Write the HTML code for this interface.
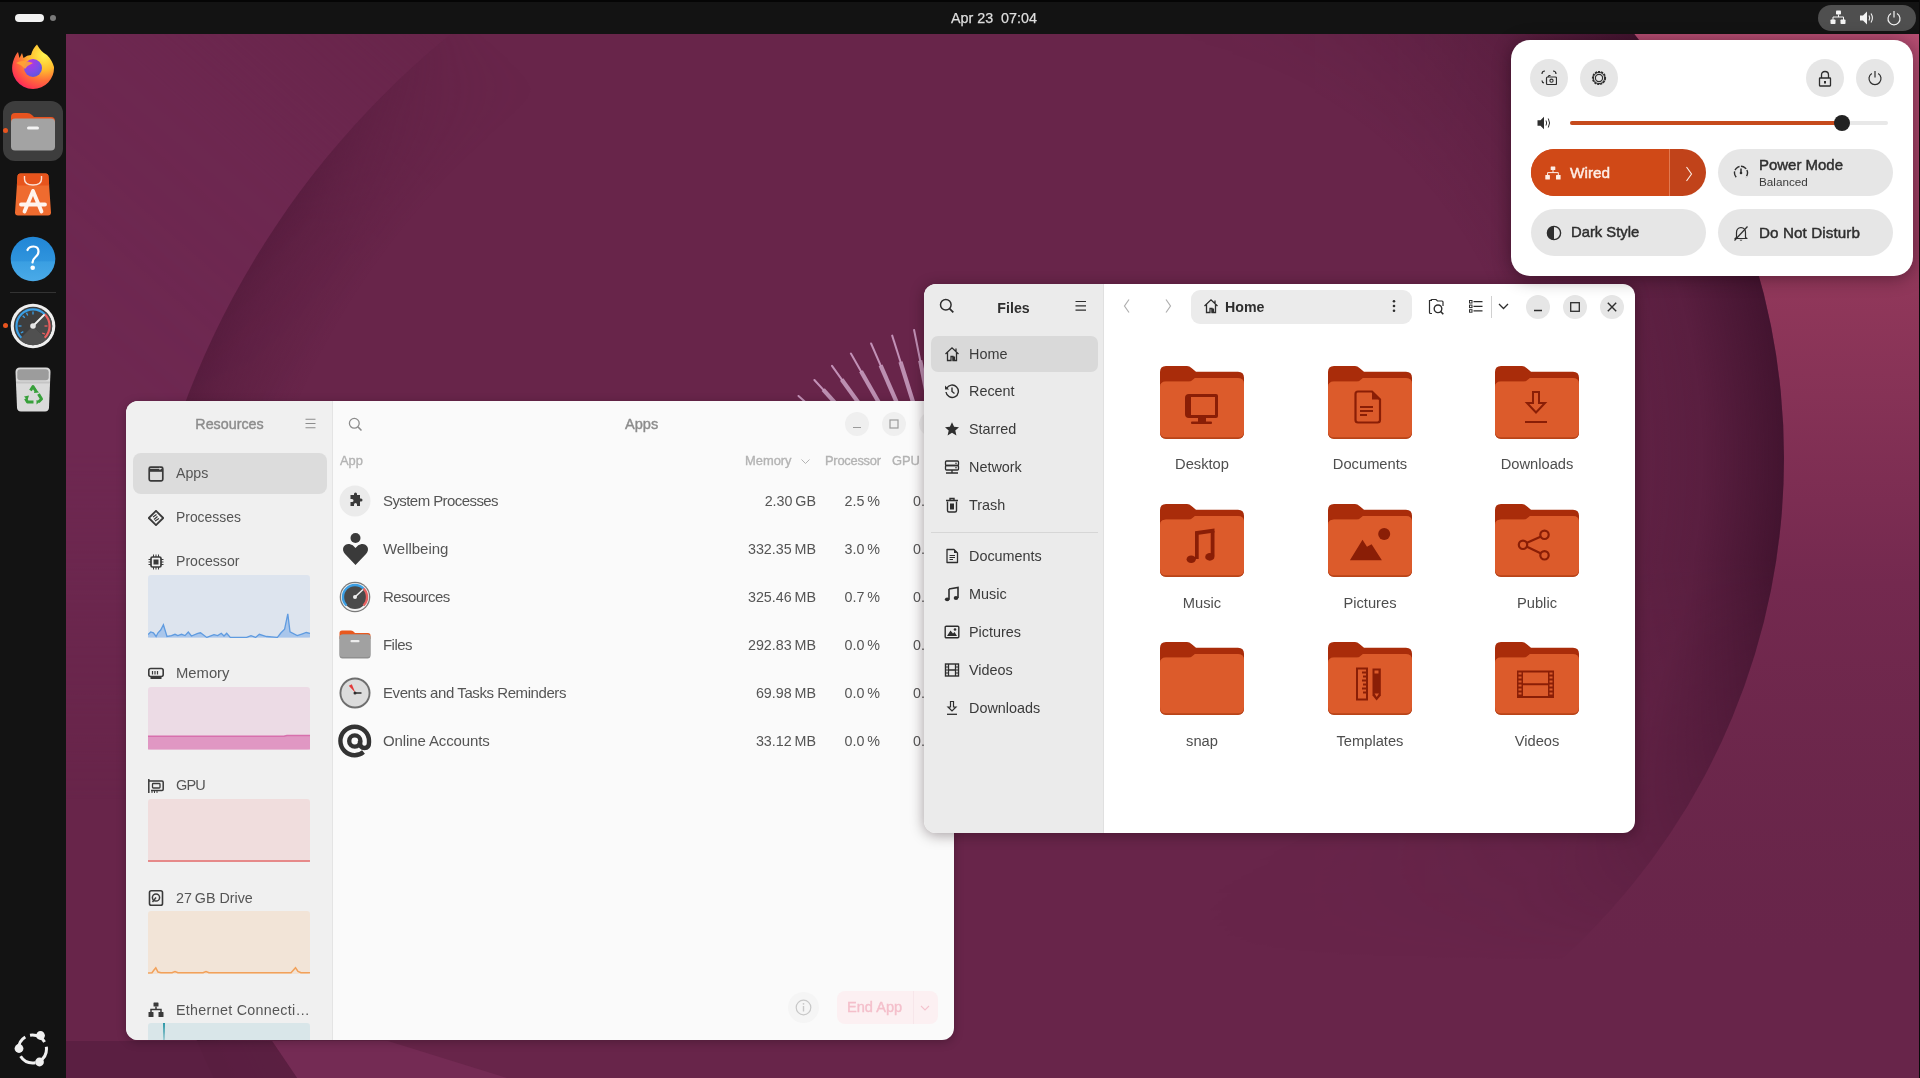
<!DOCTYPE html>
<html><head><meta charset="utf-8">
<style>
*{box-sizing:border-box}
html,body{margin:0;padding:0}
body{width:1920px;height:1078px;overflow:hidden;position:relative;font-family:"Liberation Sans",sans-serif;background:#68254a}
.a{position:absolute}
.t{position:absolute;white-space:nowrap;line-height:1;will-change:transform}
svg{display:block}
.sb{font-size:14.4px;color:#3a3a3a}
.lbl{font-size:14.7px;color:#4e4e4e}
.rs{color:#555}
</style></head><body>

<!-- WALLPAPER -->
<svg class="a" style="left:0;top:0" width="1920" height="1078" viewBox="0 0 1920 1078">
<defs>
<linearGradient id="pinkG" gradientUnits="userSpaceOnUse" x1="0" y1="34" x2="0" y2="950">
<stop offset="0" stop-color="#b64d72"/><stop offset="0.28" stop-color="#90375a"/><stop offset="0.6" stop-color="#74294f"/><stop offset="1" stop-color="#6b2749" stop-opacity="0"/>
</linearGradient>
<radialGradient id="c1G" cx="996" cy="707" r="866" gradientUnits="userSpaceOnUse">
<stop offset="0.88" stop-color="#4e1838" stop-opacity="0"/><stop offset="0.97" stop-color="#4e1838" stop-opacity="0.4"/><stop offset="1" stop-color="#4e1838" stop-opacity="0.65"/>
</radialGradient>
<radialGradient id="c2G" cx="1108" cy="458" r="676" gradientUnits="userSpaceOnUse">
<stop offset="0.62" stop-color="#3a1029" stop-opacity="0"/><stop offset="0.88" stop-color="#3a1029" stop-opacity="0.3"/><stop offset="1" stop-color="#3a1029" stop-opacity="0.8"/>
</radialGradient>
<linearGradient id="m1G" gradientUnits="userSpaceOnUse" x1="170" y1="430" x2="540" y2="10">
<stop offset="0" stop-color="#fff"/><stop offset="0.45" stop-color="#fff" stop-opacity="0.85"/><stop offset="0.9" stop-color="#fff" stop-opacity="0"/>
</linearGradient>
<mask id="m1" maskUnits="userSpaceOnUse" x="0" y="0" width="1920" height="1078"><rect width="1920" height="1078" fill="url(#m1G)"/></mask>
<linearGradient id="m2G" gradientUnits="userSpaceOnUse" x1="1150" y1="0" x2="1480" y2="0">
<stop offset="0" stop-color="#fff" stop-opacity="0"/><stop offset="1" stop-color="#fff"/>
</linearGradient>
<mask id="m2" maskUnits="userSpaceOnUse" x="0" y="0" width="1920" height="1078"><rect width="1920" height="1078" fill="url(#m2G)"/></mask>
<linearGradient id="m3G" gradientUnits="userSpaceOnUse" x1="0" y1="560" x2="0" y2="960">
<stop offset="0" stop-color="#fff"/><stop offset="1" stop-color="#fff" stop-opacity="0"/>
</linearGradient>
<mask id="m3" maskUnits="userSpaceOnUse" x="0" y="0" width="1920" height="1078"><rect width="1920" height="1078" fill="url(#m3G)"/></mask>
<linearGradient id="m4G" gradientUnits="userSpaceOnUse" x1="0" y1="450" x2="0" y2="800">
<stop offset="0" stop-color="#fff"/><stop offset="1" stop-color="#fff" stop-opacity="0"/>
</linearGradient>
<mask id="m4" maskUnits="userSpaceOnUse" x="0" y="0" width="1920" height="1078"><rect width="1920" height="1078" fill="url(#m4G)"/></mask>
</defs>
<rect width="1920" height="1078" fill="#68254a"/>
<g mask="url(#m4)"><path fill="#6e2851" fill-rule="evenodd" mask="url(#m1)" d="M0 0H1920V1078H0Z M130 707 A866 866 0 1 0 1862 707 A866 866 0 1 0 130 707Z"/></g>
<path fill="url(#pinkG)" fill-rule="evenodd" d="M1108 0H1920V1078H1108Z M1108 -218 A676 676 0 0 1 1108 1134Z"/>
<circle cx="996" cy="707" r="866" fill="url(#c1G)" mask="url(#m1)"/>
<g mask="url(#m3)"><circle cx="1108" cy="458" r="676" fill="url(#c2G)" mask="url(#m2)"/></g>
<polygon points="272,1041 388,1041 507,1078 297,1078" fill="#742b54"/>
<polygon points="66,1041 272,1041 297,1078 66,1078" fill="#591e41" opacity="0.85"/>
<path d="M914.1 330.0L920.2 360.5" stroke="#d2a4ca" stroke-width="2" stroke-linecap="round" opacity="0.85"/><path d="M920.2 360.5L933.6 428.1" stroke="#cba2c4" stroke-width="4.2" opacity="0.85"/><path d="M892.2 335.6L900.5 361.8" stroke="#d2a4ca" stroke-width="2" stroke-linecap="round" opacity="0.85"/><path d="M900.5 361.8L922.1 431.0" stroke="#cba2c4" stroke-width="4.2" opacity="0.85"/><path d="M871.1 343.5L880.6 365.4" stroke="#d2a4ca" stroke-width="2" stroke-linecap="round" opacity="0.85"/><path d="M880.6 365.4L911.0 435.2" stroke="#cba2c4" stroke-width="4.2" opacity="0.85"/><path d="M850.9 353.6L861.0 371.2" stroke="#d2a4ca" stroke-width="2" stroke-linecap="round" opacity="0.85"/><path d="M861.0 371.2L900.5 440.5" stroke="#cba2c4" stroke-width="4.2" opacity="0.85"/><path d="M832.0 365.8L841.7 379.4" stroke="#d2a4ca" stroke-width="2" stroke-linecap="round" opacity="0.85"/><path d="M841.7 379.4L890.5 446.9" stroke="#cba2c4" stroke-width="4.2" opacity="0.85"/><path d="M814.4 380.0L823.2 389.7" stroke="#d2a4ca" stroke-width="2" stroke-linecap="round" opacity="0.85"/><path d="M823.2 389.7L881.4 454.3" stroke="#cba2c4" stroke-width="4.2" opacity="0.85"/><path d="M798.5 396.0L805.6 402.3" stroke="#d2a4ca" stroke-width="2" stroke-linecap="round" opacity="0.85"/><path d="M805.6 402.3L873.0 462.7" stroke="#cba2c4" stroke-width="4.2" opacity="0.85"/><path d="M784.4 413.6L789.1 417.0" stroke="#d2a4ca" stroke-width="2" stroke-linecap="round" opacity="0.85"/><path d="M789.1 417.0L865.6 471.9" stroke="#cba2c4" stroke-width="4.2" opacity="0.85"/><path d="M772.2 432.6L774.2 433.8" stroke="#d2a4ca" stroke-width="2" stroke-linecap="round" opacity="0.85"/><path d="M774.2 433.8L859.3 481.9" stroke="#cba2c4" stroke-width="4.2" opacity="0.85"/><path d="M762.2 452.8L761.0 452.3" stroke="#d2a4ca" stroke-width="2" stroke-linecap="round" opacity="0.85"/><path d="M761.0 452.3L854.0 492.4" stroke="#cba2c4" stroke-width="4.2" opacity="0.85"/><path d="M754.4 474.0L749.7 472.6" stroke="#d2a4ca" stroke-width="2" stroke-linecap="round" opacity="0.85"/><path d="M749.7 472.6L849.9 503.5" stroke="#cba2c4" stroke-width="4.2" opacity="0.85"/><path d="M748.9 495.9L740.5 494.3" stroke="#d2a4ca" stroke-width="2" stroke-linecap="round" opacity="0.85"/><path d="M740.5 494.3L847.0 515.0" stroke="#cba2c4" stroke-width="4.2" opacity="0.85"/><path d="M745.8 518.2L733.7 517.2" stroke="#d2a4ca" stroke-width="2" stroke-linecap="round" opacity="0.85"/><path d="M733.7 517.2L845.4 526.7" stroke="#cba2c4" stroke-width="4.2" opacity="0.85"/><path d="M745.1 540.8L729.4 541.2" stroke="#d2a4ca" stroke-width="2" stroke-linecap="round" opacity="0.85"/><path d="M729.4 541.2L845.0 538.5" stroke="#cba2c4" stroke-width="4.2" opacity="0.85"/>
</svg>

<!-- TOP BAR -->
<div class="a" style="left:0;top:0;width:1920px;height:34px;background:#131313;border-top:2px solid #050505"></div>
<div class="a" style="left:15px;top:14px;width:29px;height:8px;border-radius:4px;background:#f2f2f2"></div>
<div class="a" style="left:50px;top:15px;width:6px;height:6px;border-radius:3px;background:#7a7a7a"></div>
<div class="t" style="left:950.5px;top:11.2px;font-size:14.3px;color:#dedede;-webkit-text-stroke:0.25px currentColor">Apr 23&nbsp; 07:04</div>
<div class="a" style="left:1818px;top:5px;width:98px;height:26px;border-radius:13px;background:#4f4f4f"></div>
<div class="a" style="left:1919px;top:0;width:1px;height:1078px;background:#0a0a0a"></div>
<svg class="a" style="left:1830px;top:10px" width="17" height="15" viewBox="0 0 17 15">
<rect x="6" y="0.5" width="5" height="4" rx="0.8" fill="#f4f4f4"/><rect x="0.5" y="9.5" width="5" height="4.5" rx="0.8" fill="#f4f4f4"/><rect x="10.5" y="9.5" width="5" height="4.5" rx="0.8" fill="#f4f4f4"/>
<path d="M8.5 4.5V7M3 10V7H13.5V10" stroke="#f4f4f4" stroke-width="1" fill="none"/>
</svg>
<svg class="a" style="left:1859px;top:10px" width="16" height="16" viewBox="0 0 16 16">
<path d="M1 5.5H4L8 1.5V14.5L4 10.5H1Z" fill="#f4f4f4"/>
<path d="M10 5.5Q11.5 8 10 10.5M12 3.5Q14.8 8 12 12.5" stroke="#f4f4f4" stroke-width="1.1" fill="none"/>
</svg>
<svg class="a" style="left:1886px;top:10px" width="16" height="16" viewBox="0 0 16 16">
<path d="M5 3.6A6 6 0 1 0 11 3.6" stroke="#f4f4f4" stroke-width="1.2" fill="none"/><path d="M8 1V7.5" stroke="#f4f4f4" stroke-width="1.2"/>
</svg>

<!-- DOCK -->
<div class="a" style="left:0;top:34px;width:66px;height:1044px;background:#131313"></div>
<div class="a" style="left:3px;top:101px;width:60px;height:60px;border-radius:12px;background:#3d3d3d"></div>
<div class="a" style="left:3px;top:128px;width:5px;height:5px;border-radius:3px;background:#e9551f"></div>
<div class="a" style="left:3px;top:323px;width:5px;height:5px;border-radius:3px;background:#e9551f"></div>
<div class="a" style="left:10px;top:292px;width:46px;height:1px;background:#333"></div>
<!-- firefox -->
<svg class="a" style="left:10px;top:43px" width="46" height="48" viewBox="0 0 46 48">
<defs>
<radialGradient id="ffA" cx="34" cy="12" r="42" gradientUnits="userSpaceOnUse"><stop offset="0" stop-color="#fff44f"/><stop offset="0.35" stop-color="#ffbd2e"/><stop offset="0.6" stop-color="#ff7139"/><stop offset="0.85" stop-color="#ff3750"/><stop offset="1" stop-color="#e31587"/></radialGradient>
<radialGradient id="ffB" cx="20" cy="20" r="16" gradientUnits="userSpaceOnUse"><stop offset="0" stop-color="#b833e1"/><stop offset="0.6" stop-color="#7a4ee8"/><stop offset="1" stop-color="#5b56d6"/></radialGradient>
</defs>
<path d="M23 46A21 21 0 0 1 3 19Q5 12 8 9L9.5 15L12 10L13.5 15Q17 12 21 12Q23 5 27 1.5Q31 9 37 12Q42 17 44 24A21 21 0 0 1 23 46Z" fill="url(#ffA)"/>
<circle cx="23" cy="25" r="9" fill="url(#ffB)"/>
<path d="M6 20Q12 16 23 20Q18 22 15 26Q12 22 6 20Z" fill="#ffa436" opacity="0.9"/>
</svg>
<!-- files -->
<svg class="a" style="left:11px;top:112px" width="44" height="39" viewBox="0 0 44 39">
<path d="M0 5Q0 1 4 1H16Q19 1 21 3L23 5H40Q44 5 44 9V14H0Z" fill="#e8531f"/>
<rect x="0" y="6.5" width="44" height="32" rx="4" fill="#a3a3a3"/>
<rect x="16" y="14.5" width="12" height="3" rx="1.5" fill="#f4f4f4"/>
</svg>
<!-- app center -->
<svg class="a" style="left:15px;top:173px" width="36" height="43" viewBox="0 0 36 43">
<path d="M2.5 3.5Q2.5 0.5 5.5 0.5H30.5Q33.5 0.5 33.5 3.5L36 39.5Q36 42.5 33 42.5H3Q0 42.5 0 39.5Z" fill="#ef6b2f"/>
<path d="M2.5 3.5Q2.5 0.5 5.5 0.5H30.5Q33.5 0.5 33.5 3.5L34.2 12.5H1.8Z" fill="#e7541c"/>
<path d="M9.5 3V6Q9.5 12 18 12Q26.5 12 26.5 6V3" stroke="#fbe2d6" stroke-width="1.4" fill="none"/>
<path d="M18 18L9.5 38.5M18 18L26.5 38.5M6 31.5H30" stroke="#fff4ee" stroke-width="3.8" stroke-linecap="round" fill="none"/>
</svg>
<!-- help -->
<svg class="a" style="left:10px;top:236px" width="46" height="46" viewBox="0 0 46 46">
<defs><linearGradient id="hlp" x1="0" y1="0" x2="0" y2="1"><stop offset="0" stop-color="#2186d6"/><stop offset="0.55" stop-color="#2f94dd"/><stop offset="0.56" stop-color="#3a9fe2"/><stop offset="1" stop-color="#4aaae8"/></linearGradient></defs>
<circle cx="23" cy="23" r="22.3" fill="url(#hlp)"/>
<path d="M17.5 14Q19 10.5 23.5 10.5Q28.5 10.5 28.5 15.5Q28.5 18.5 25.5 21Q23 23 22.5 26.5" stroke="#fff" stroke-width="2.2" fill="none" stroke-linecap="round"/>
<circle cx="22.7" cy="31.8" r="2.3" fill="#fff"/>
</svg>
<!-- resources gauge -->
<svg class="a" style="left:10px;top:303px" width="46" height="46" viewBox="0 0 46 46">
<circle cx="23" cy="23" r="22.3" fill="#efefef"/>
<circle cx="23" cy="23" r="19.2" fill="#3e3e3e"/>
<path d="M23 23L9.4 36.6A19.2 19.2 0 0 0 36.6 36.6Z" fill="#505050"/>
<path d="M23 23L36.6 36.6A19.2 19.2 0 0 0 36.6 9.4Z" fill="#4a4a4a"/>
<path d="M11.3 34.7A16.5 16.5 0 0 1 34.7 11.3" stroke="#3a9fe6" stroke-width="2.2" fill="none"/>
<path d="M34.7 11.3A16.5 16.5 0 0 1 34.7 34.7" stroke="#ee5f5f" stroke-width="2.2" fill="none"/>
<g stroke="#3a9fe6" stroke-width="1.3"><path d="M8.5 23H11.5"/><path d="M12.7 12.7L14.8 14.8"/><path d="M23 8.5V11.5"/><path d="M10.8 30L13.3 28.7"/><path d="M16.5 9.8L17.7 12.5"/></g>
<g stroke="#ee5f5f" stroke-width="1.3"><path d="M34.5 23H37.5"/><path d="M32.2 30L35 31.2"/></g>
<path d="M23 23L34 12" stroke="#f2f2f2" stroke-width="1.8" stroke-linecap="round"/>
<circle cx="23" cy="23" r="2.8" fill="#e6e6e6"/>
</svg>
<!-- trash -->
<svg class="a" style="left:15px;top:367px" width="36" height="45" viewBox="0 0 36 45">
<path d="M0.5 5Q0.5 0.5 5 0.5H31Q35.5 0.5 35.5 5L34 40.5Q33.8 44.5 30 44.5H6Q2.2 44.5 2 40.5Z" fill="#dadada"/>
<rect x="2.3" y="2.3" width="31.4" height="11" rx="3" fill="#9c9c9c"/>
<path d="M1 15.5H35" stroke="#c4c4c4" stroke-width="2"/>
<g fill="none" stroke="#37a03a" stroke-width="3" stroke-linejoin="round"><path d="M15.5 23.5L18 19.5L20.5 23.5"/><path d="M23.5 27L26.5 32L23.5 35"/><path d="M18.5 35H12.5L10.5 31.5"/></g>
<g fill="#37a03a"><path d="M20 21L24 25.5L19 26Z"/><path d="M21.5 33L21.5 37.5L25 34.5Z"/><path d="M9 29.5L12.5 33L14 28.5Z"/></g>
</svg>
<!-- ubuntu logo -->
<svg class="a" style="left:12px;top:1029px" width="40" height="40" viewBox="0 0 40 40">
<circle cx="20.5" cy="20" r="14" stroke="#f0f0f0" stroke-width="3" fill="none" stroke-dasharray="17 5" stroke-dashoffset="3"/>
<circle cx="28.5" cy="6.5" r="4.4" fill="#f0f0f0"/><circle cx="7" cy="19.5" r="4.4" fill="#f0f0f0"/><circle cx="27.5" cy="33" r="4.4" fill="#f0f0f0"/>
</svg>

<!-- RESOURCES WINDOW -->
<div class="a" id="res" style="left:126px;top:401px;width:828px;height:639px;border-radius:12px;background:#fafafa;overflow:hidden;box-shadow:0 2px 10px rgba(0,0,0,0.25)">
<div class="a" style="left:0;top:0;width:207px;height:639px;background:#f0f0f0;border-right:1px solid #e4e4e4"></div>
<div class="t" style="left:0;top:15.5px;width:207px;text-align:center;font-size:14.3px;font-weight:normal;-webkit-text-stroke:0.4px currentColor;color:#8c8c8c">Resources</div>
<svg class="a" style="left:178.5px;top:16.5px" width="11" height="11" viewBox="0 0 11 11"><path d="M0.5 1.3H10.5M0.5 5.5H10.5M0.5 9.7H10.5" stroke="#8c8c8c" stroke-width="1.1"/></svg>
<div class="a" style="left:6.5px;top:52.3px;width:194px;height:41px;border-radius:8px;background:#dcdcdc"></div>
<svg class="a" style="left:22px;top:64.8px" width="16" height="16" viewBox="0 0 16 16"><rect x="1.2" y="1.2" width="13.6" height="13.6" rx="1.5" stroke="#3a3a3a" stroke-width="1.7" fill="none"/><path d="M1.2 4.3H14.8" stroke="#3a3a3a" stroke-width="3"/><path d="M11.3 2L13 3.6M13 2L11.3 3.6" stroke="#f0f0f0" stroke-width="0.7"/></svg>
<div class="t rs" style="left:50px;top:64.8px;font-size:14.2px">Apps</div>
<svg class="a" style="left:22px;top:108.7px" width="16" height="16" viewBox="0 0 16 16"><path d="M8 0.8L15.2 8L8 15.2L0.8 8Z" stroke="#3a3a3a" stroke-width="1.8" fill="none" stroke-linejoin="round"/><path d="M5 7L8.5 4.5M7 11L11 8.5M6 9.5L9.5 6.5" stroke="#3a3a3a" stroke-width="1.2"/></svg>
<div class="t rs" style="left:50px;top:110.2px;font-size:13.9px">Processes</div>
<svg class="a" style="left:22px;top:152.6px" width="16" height="16" viewBox="0 0 16 16"><rect x="3" y="3" width="10" height="10" rx="1.5" stroke="#3a3a3a" stroke-width="1.7" fill="none"/><rect x="5.5" y="5.5" width="5" height="5" fill="#3a3a3a"/><path d="M5.5 0.5V3M8 0.5V3M10.5 0.5V3M5.5 13V15.5M8 13V15.5M10.5 13V15.5M0.5 5.5H3M0.5 8H3M0.5 10.5H3M13 5.5H15.5M13 8H15.5M13 10.5H15.5" stroke="#3a3a3a" stroke-width="1"/></svg>
<div class="t rs" style="left:50px;top:152.9px;font-size:14.1px">Processor</div>
<svg class="a" style="left:22px;top:264.5px" width="16" height="16" viewBox="0 0 16 16"><rect x="0.8" y="2.5" width="14.4" height="8" rx="2" stroke="#3a3a3a" stroke-width="1.6" fill="none"/><path d="M4.5 5V8.5M7 5V8.5M9.5 5V8.5" stroke="#3a3a3a" stroke-width="1.2"/><path d="M2.5 10.5V13H13.5V10.5" fill="#3a3a3a"/></svg>
<div class="t rs" style="left:50px;top:265.0px;font-size:14.8px">Memory</div>
<svg class="a" style="left:22px;top:376.5px" width="16" height="16" viewBox="0 0 16 16"><path d="M0.8 1V15M0.8 3H14Q15.2 3 15.2 4.2V11.3Q15.2 12.5 14 12.5H3" stroke="#3a3a3a" stroke-width="1.5" fill="none"/><rect x="4.5" y="5.5" width="7.5" height="4.5" rx="0.8" stroke="#3a3a3a" stroke-width="1.3" fill="none"/><path d="M4 12.5V15M6.5 12.5V15M9 12.5V15" stroke="#3a3a3a" stroke-width="1"/></svg>
<div class="t rs" style="left:50px;top:377.0px;font-size:14.5px;letter-spacing:-0.9px">GPU</div>
<svg class="a" style="left:22px;top:488.7px" width="16" height="16" viewBox="0 0 16 16"><rect x="1.5" y="0.8" width="13" height="14.4" rx="1.8" stroke="#3a3a3a" stroke-width="1.6" fill="none"/><circle cx="8" cy="7.5" r="3.6" stroke="#3a3a3a" stroke-width="1.5" fill="none"/><path d="M8 7.5L4.5 12" stroke="#3a3a3a" stroke-width="1.4"/></svg>
<div class="t rs" style="left:50px;top:489.7px;font-size:14.3px">27 GB Drive</div>
<svg class="a" style="left:22px;top:600.8px" width="16" height="16" viewBox="0 0 16 16"><rect x="5.5" y="0.5" width="5" height="4" rx="0.6" fill="#3a3a3a"/><rect x="0.5" y="10" width="5" height="5" rx="0.6" fill="#3a3a3a"/><rect x="10.5" y="10" width="5" height="5" rx="0.6" fill="#3a3a3a"/><path d="M8 4.5V7.5M3 10V7.5H13V10" stroke="#3a3a3a" stroke-width="1.5" fill="none"/></svg>
<div class="t rs" style="left:50px;top:601.8px;font-size:14.3px;letter-spacing:0.3px">Ethernet Connecti…</div>
<svg class="a" style="left:22px;top:174px" width="162" height="63" viewBox="0 0 162 63"><rect width="162" height="63" rx="3" fill="#dde4ee"/><path d="M0,62.5 L0,59.6 L2.7,57 L5.4,57.8 L8.1,61.5 L10,57.8 L12.7,55 L15.4,49.7 L19,61.5 L23.5,60.6 L27,59.3 L29.8,60.6 L33.5,59.3 L37,60.6 L40.3,57 L43.4,61 L49.8,58.3 L52.5,57.8 L58.8,62.4 L66,59.6 L69.7,60.6 L73.3,58.3 L76,61 L78.7,58.3 L82.3,62.4 L98.6,62.4 L103,60.6 L107.6,62.4 L111.3,59.3 L118.5,61.5 L129.4,62.4 L133,57.8 L136.6,54.2 L139.8,38.8 L142,56.9 L149.2,60.6 L154.5,58.8 L158.2,57.5 L162,58.3 L162,62.5Z" fill="#a9c6eb"/><polyline points="0,59.6 2.7,57 5.4,57.8 8.1,61.5 10,57.8 12.7,55 15.4,49.7 19,61.5 23.5,60.6 27,59.3 29.8,60.6 33.5,59.3 37,60.6 40.3,57 43.4,61 49.8,58.3 52.5,57.8 58.8,62.4 66,59.6 69.7,60.6 73.3,58.3 76,61 78.7,58.3 82.3,62.4 98.6,62.4 103,60.6 107.6,62.4 111.3,59.3 118.5,61.5 129.4,62.4 133,57.8 136.6,54.2 139.8,38.8 142,56.9 149.2,60.6 154.5,58.8 158.2,57.5 162,58.3" fill="none" stroke="#5f9be0" stroke-width="1.3"/></svg>
<svg class="a" style="left:22px;top:286px" width="162" height="63" viewBox="0 0 162 63"><rect width="162" height="63" rx="3" fill="#ecdbe5"/><path d="M0,49 H136 L139,48.3 H162 V62.5 H0Z" fill="#e097c3"/><path d="M0,49.3 H136 L139,48.5 H162" stroke="#d770ad" stroke-width="1.5" fill="none"/></svg>
<svg class="a" style="left:22px;top:398px" width="162" height="63" viewBox="0 0 162 63"><rect width="162" height="63" rx="3" fill="#f0dddd"/><path d="M0,62 H162" stroke="#e36c6c" stroke-width="1.5"/></svg>
<svg class="a" style="left:22px;top:510px" width="162" height="63" viewBox="0 0 162 63"><rect width="162" height="63" rx="3" fill="#f2e4d7"/><polyline points="0,62 4,61.8 6,59 7.8,56.8 10,61 13,61.8 24,61.8 27,60.5 30,61.8 55,61.8 58,60.5 61,61.8 143,61.8 145.5,59 147.5,56.8 150,60.5 153,61.8 162,61.8" fill="none" stroke="#f2a15a" stroke-width="1.5"/></svg>
<svg class="a" style="left:22px;top:622px" width="162" height="63" viewBox="0 0 162 63"><rect width="162" height="63" rx="3" fill="#d9e6e9"/><path d="M15,0 L16,20 L17,0Z" fill="#2b97a6"/><path d="M16,0 V62" stroke="#2b97a6" stroke-width="0.7" opacity="0.5"/></svg>
<svg class="a" style="left:222px;top:15.5px" width="15" height="15" viewBox="0 0 15 15"><circle cx="6.3" cy="6.3" r="4.9" stroke="#8c8c8c" stroke-width="1.3" fill="none"/><path d="M9.9 9.9L13.5 13.5" stroke="#8c8c8c" stroke-width="1.5"/></svg>
<div class="t" style="left:498.5px;top:15.5px;font-size:14.6px;font-weight:normal;-webkit-text-stroke:0.4px currentColor;color:#8c8c8c">Apps</div>
<div class="a" style="left:718.5px;top:11px;width:24px;height:24px;border-radius:12px;background:#efefef"></div>
<div class="a" style="left:755.5px;top:11px;width:24px;height:24px;border-radius:12px;background:#efefef"></div>
<svg class="a" style="left:718.5px;top:11px" width="24" height="24" viewBox="0 0 24 24"><path d="M8 15.5H16" stroke="#9a9a9a" stroke-width="1.2"/></svg>
<svg class="a" style="left:755.5px;top:11px" width="24" height="24" viewBox="0 0 24 24"><rect x="8" y="8" width="8" height="8" stroke="#9a9a9a" stroke-width="1.2" fill="none"/></svg>
<div class="a" style="left:792.5px;top:11px;width:24px;height:24px;border-radius:12px;background:#efefef"></div>
<div class="t" style="left:213.5px;top:53.5px;font-size:12.9px;font-weight:normal;-webkit-text-stroke:0.35px currentColor;color:#b3b3b3">App</div>
<div class="t" style="left:619px;top:53.5px;font-size:12.9px;font-weight:normal;-webkit-text-stroke:0.35px currentColor;color:#b3b3b3">Memory</div>
<svg class="a" style="left:674.5px;top:58px" width="9" height="5" viewBox="0 0 9 5"><path d="M0.5 0.5L4.5 4.5L8.5 0.5" stroke="#b3b3b3" stroke-width="1" fill="none"/></svg>
<div class="t" style="left:699px;top:53.5px;font-size:12.9px;font-weight:normal;-webkit-text-stroke:0.35px currentColor;color:#b3b3b3;letter-spacing:-0.25px">Processor</div>
<div class="t" style="left:766px;top:53.5px;font-size:12.9px;font-weight:normal;-webkit-text-stroke:0.35px currentColor;color:#b3b3b3">GPU</div>
<div class="t rs" style="left:257px;top:92.1px;font-size:15px;letter-spacing:-0.575px">System Processes</div>
<div class="t rs" style="left:490px;top:92.5px;width:200px;text-align:right;font-size:14.3px">2.30 GB</div>
<div class="t rs" style="left:654px;top:92.5px;width:100px;text-align:right;font-size:14.3px">2.5 %</div>
<div class="t rs" style="left:787px;top:92.5px;font-size:14.3px">0.</div>
<div class="t rs" style="left:257px;top:140.1px;font-size:15px;letter-spacing:-0.033px">Wellbeing</div>
<div class="t rs" style="left:490px;top:140.5px;width:200px;text-align:right;font-size:14.3px">332.35 MB</div>
<div class="t rs" style="left:654px;top:140.5px;width:100px;text-align:right;font-size:14.3px">3.0 %</div>
<div class="t rs" style="left:787px;top:140.5px;font-size:14.3px">0.</div>
<div class="t rs" style="left:257px;top:188.1px;font-size:15px;letter-spacing:-0.555px">Resources</div>
<div class="t rs" style="left:490px;top:188.5px;width:200px;text-align:right;font-size:14.3px">325.46 MB</div>
<div class="t rs" style="left:654px;top:188.5px;width:100px;text-align:right;font-size:14.3px">0.7 %</div>
<div class="t rs" style="left:787px;top:188.5px;font-size:14.3px">0.</div>
<div class="t rs" style="left:257px;top:236.1px;font-size:15px;letter-spacing:-0.554px">Files</div>
<div class="t rs" style="left:490px;top:236.5px;width:200px;text-align:right;font-size:14.3px">292.83 MB</div>
<div class="t rs" style="left:654px;top:236.5px;width:100px;text-align:right;font-size:14.3px">0.0 %</div>
<div class="t rs" style="left:787px;top:236.5px;font-size:14.3px">0.</div>
<div class="t rs" style="left:257px;top:284.1px;font-size:15px;letter-spacing:-0.422px">Events and Tasks Reminders</div>
<div class="t rs" style="left:490px;top:284.5px;width:200px;text-align:right;font-size:14.3px">69.98 MB</div>
<div class="t rs" style="left:654px;top:284.5px;width:100px;text-align:right;font-size:14.3px">0.0 %</div>
<div class="t rs" style="left:787px;top:284.5px;font-size:14.3px">0.</div>
<div class="t rs" style="left:257px;top:332.1px;font-size:15px;letter-spacing:-0.113px">Online Accounts</div>
<div class="t rs" style="left:490px;top:332.5px;width:200px;text-align:right;font-size:14.3px">33.12 MB</div>
<div class="t rs" style="left:654px;top:332.5px;width:100px;text-align:right;font-size:14.3px">0.0 %</div>
<div class="t rs" style="left:787px;top:332.5px;font-size:14.3px">0.</div>
<svg class="a" style="left:212.5px;top:84px" width="32" height="32" viewBox="0 0 32 32"><circle cx="16" cy="16" r="15.5" fill="#ebebeb"/><path d="M12 10H15V9Q15 7.5 16.5 7.5Q18 7.5 18 9V10H21V13.5H22Q23.5 13.5 23.5 15Q23.5 16.5 22 16.5H21V21H18V19.5Q18 18 16.5 18Q15 18 15 19.5V21H11.5V17H13Q14.5 17 14.5 15.5Q14.5 14 13 14H11.5V10Z" fill="#3a3a3a"/></svg>
<svg class="a" style="left:212.5px;top:132px" width="32" height="32" viewBox="0 0 32 32"><circle cx="16.5" cy="5" r="5" fill="#3a3a3a"/><path d="M16.5 32L6 21Q3 17.5 4.5 14Q6.5 10.5 10.5 11Q14 11.5 16.5 15Q19 11.5 22.5 11Q26.5 10.5 28.5 14Q30 17.5 27 21Z" fill="#3a3a3a"/></svg>
<svg class="a" style="left:212.5px;top:180px" width="32" height="32" viewBox="0 0 32 32"><circle cx="16" cy="16" r="15.3" fill="#7a7a7a"/><circle cx="16" cy="16" r="14" fill="#f2f2f2"/><circle cx="16" cy="16" r="12" fill="#4a4a4a"/><path d="M7.5 24.5A12 12 0 0 1 24.5 7.5" stroke="#3c9fe4" stroke-width="2.4" fill="none"/><path d="M24.5 7.5A12 12 0 0 1 24.5 24.5" stroke="#e86060" stroke-width="2.4" fill="none"/><path d="M16 16L24 8.5" stroke="#f2f2f2" stroke-width="1.5"/><circle cx="16" cy="16" r="2" fill="#eee"/></svg>
<svg class="a" style="left:212.5px;top:228px" width="32" height="32" viewBox="0 0 32 32"><path d="M0.5 4Q0.5 1.5 3 1.5H12Q14 1.5 15 3L16 4H29Q31.5 4 31.5 6.5V10H0.5Z" fill="#e8591f"/><rect x="0.5" y="5.5" width="31" height="24" rx="3" fill="#8f8f8f"/><rect x="0.5" y="5.5" width="31" height="22.5" rx="3" fill="#a1a1a1"/><rect x="11.5" y="11" width="9" height="2.2" rx="1" fill="#ececec"/></svg>
<svg class="a" style="left:212.5px;top:276px" width="32" height="32" viewBox="0 0 32 32"><circle cx="16" cy="16" r="15.5" fill="#6e6e6e"/><circle cx="16" cy="16" r="13.6" fill="#dcdcdc"/><path d="M16.5 16L9.8 8.8L12.8 7.2Z" fill="#e23b3b"/><path d="M16 16H22.5" stroke="#2e2e2e" stroke-width="1.5"/><circle cx="16" cy="16" r="1.5" fill="#2e2e2e"/></svg>
<svg class="a" style="left:211.5px;top:323px" width="34" height="34" viewBox="0 0 34 34"><path d="M25.5 28Q21.5 31.3 16.8 31.3A14.3 14.3 0 1 1 31 17V18.5Q31 24 26.5 24Q22 24 22 18.5V17" stroke="#333" stroke-width="4.4" fill="none"/><circle cx="16.8" cy="17" r="5.6" stroke="#333" stroke-width="4.4" fill="none"/></svg>
<div class="a" style="left:662px;top:591px;width:31px;height:31px;border-radius:16px;background:#f5f5f5"></div>
<svg class="a" style="left:669px;top:598px" width="17" height="17" viewBox="0 0 17 17"><circle cx="8.5" cy="8.5" r="7.3" stroke="#c8c8c8" stroke-width="1.2" fill="none"/><path d="M8.5 7V12.5" stroke="#c8c8c8" stroke-width="1.4"/><circle cx="8.5" cy="4.8" r="0.9" fill="#c8c8c8"/></svg>
<div class="a" style="left:710.5px;top:590px;width:101px;height:33px;border-radius:8px;background:#fcf0f2"></div>
<div class="a" style="left:787px;top:590px;width:1px;height:33px;background:#f7e6ea"></div>
<div class="t" style="left:720.5px;top:598.5px;font-size:14.6px;font-weight:normal;-webkit-text-stroke:0.4px currentColor;color:#f4bfcb">End App</div>
<svg class="a" style="left:794px;top:603.5px" width="10" height="6" viewBox="0 0 10 6"><path d="M1 1L5 5L9 1" stroke="#f4c3ce" stroke-width="1.1" fill="none"/></svg>
</div>

<!-- FILES WINDOW -->
<div class="a" id="files" style="left:924px;top:284px;width:711px;height:549px;border-radius:12px;background:#ffffff;overflow:hidden;box-shadow:0 2px 14px rgba(20,0,10,0.38)">

<div class="a" style="left:0;top:0;width:180px;height:549px;background:#ebebeb;border-right:1px solid #e0e0e0"></div>
<svg class="a" style="left:15px;top:14px" width="16" height="16" viewBox="0 0 16 16"><circle cx="6.8" cy="6.8" r="5.3" stroke="#2e2e2e" stroke-width="1.5" fill="none"/><path d="M10.6 10.6L14.3 14.3" stroke="#2e2e2e" stroke-width="1.8"/></svg>
<div class="t" style="left:0;top:16.5px;width:179px;text-align:center;font-size:14.2px;font-weight:bold;color:#2e2e2e">Files</div>
<svg class="a" style="left:151px;top:16px" width="12" height="12" viewBox="0 0 12 12"><path d="M0.5 1.5H11M0.5 5.8H11M0.5 10.1H11" stroke="#2e2e2e" stroke-width="1.2"/></svg>
<div class="a" style="left:7px;top:52px;width:167px;height:36px;border-radius:7px;background:#d9d9d9"></div>
<svg class="a" style="left:20px;top:62px" width="16" height="16" viewBox="0 0 16 16"><path d="M1.5 8L8 1.8L14.5 8M3.5 6.5V14.5H7V10.5H9V14.5H12.5V6.5M12 2.5V5" stroke="#2e2e2e" stroke-width="1.3" fill="none"/><rect x="8.6" y="10.5" width="2.5" height="4" fill="#2e2e2e"/></svg>
<div class="t sb" style="left:45px;top:62.5px">Home</div>
<svg class="a" style="left:20px;top:99px" width="16" height="16" viewBox="0 0 16 16"><path d="M2.6 5.5A6.2 6.2 0 1 1 2 9" stroke="#2e2e2e" stroke-width="1.4" fill="none"/><path d="M1 2.5V6.5H5Z" fill="#2e2e2e"/><path d="M8 4.5V8.5L10.5 10.5" stroke="#2e2e2e" stroke-width="1.4" fill="none"/></svg>
<div class="t sb" style="left:45px;top:100.4px">Recent</div>
<svg class="a" style="left:20px;top:137px" width="16" height="16" viewBox="0 0 16 16"><path d="M8 1.2L10.1 5.7L15 6.2L11.3 9.5L12.4 14.4L8 11.8L3.6 14.4L4.7 9.5L1 6.2L5.9 5.7Z" fill="#2e2e2e"/></svg>
<div class="t sb" style="left:45px;top:138.4px">Starred</div>
<svg class="a" style="left:20px;top:175px" width="16" height="16" viewBox="0 0 16 16"><rect x="1.5" y="2" width="13" height="4.5" rx="1" stroke="#2e2e2e" stroke-width="1.3" fill="none"/><rect x="1.5" y="6.5" width="13" height="4.5" rx="1" stroke="#2e2e2e" stroke-width="1.3" fill="none"/><circle cx="12" cy="4.3" r="0.8" fill="#2e2e2e"/><circle cx="12" cy="8.8" r="0.8" fill="#2e2e2e"/><path d="M8 11V13.5M2 14H14" stroke="#2e2e2e" stroke-width="1.3"/></svg>
<div class="t sb" style="left:45px;top:176.4px">Network</div>
<svg class="a" style="left:20px;top:213px" width="16" height="16" viewBox="0 0 16 16"><path d="M3.5 4.5V13.5Q3.5 15 5 15H11Q12.5 15 12.5 13.5V4.5" stroke="#2e2e2e" stroke-width="1.4" fill="none"/><path d="M2 3.5H14M6 3.5V1.5H10V3.5" stroke="#2e2e2e" stroke-width="1.4" fill="none"/><path d="M6 6.5V12.5H10V6.5Z" fill="#2e2e2e"/></svg>
<div class="t sb" style="left:45px;top:214.4px">Trash</div>
<svg class="a" style="left:20px;top:264px" width="16" height="16" viewBox="0 0 16 16"><path d="M3 1.5H10L13.5 5V14.5H3Z" stroke="#2e2e2e" stroke-width="1.3" fill="none" stroke-linejoin="round"/><path d="M10 1.5V5H13.5" fill="#2e2e2e"/><path d="M5.5 7.5H11M5.5 9.5H11M5.5 11.5H9" stroke="#2e2e2e" stroke-width="1.1"/></svg>
<div class="t sb" style="left:45px;top:265.0px">Documents</div>
<svg class="a" style="left:20px;top:302px" width="16" height="16" viewBox="0 0 16 16"><path d="M5 3L14 1.5V12M5 3V13.5" stroke="#2e2e2e" stroke-width="1.6" fill="none"/><ellipse cx="3.2" cy="13.3" rx="2.3" ry="1.9" fill="#2e2e2e"/><ellipse cx="12" cy="12" rx="2.3" ry="1.9" fill="#2e2e2e"/></svg>
<div class="t sb" style="left:45px;top:303.4px">Music</div>
<svg class="a" style="left:20px;top:340px" width="16" height="16" viewBox="0 0 16 16"><rect x="1.2" y="2.2" width="13.6" height="11.6" rx="1" stroke="#2e2e2e" stroke-width="1.4" fill="none"/><path d="M3 12L6.5 6.5L9 9.5L10.5 8L13 12Z" fill="#2e2e2e"/><circle cx="11" cy="5.5" r="1.3" fill="#2e2e2e"/></svg>
<div class="t sb" style="left:45px;top:341.4px">Pictures</div>
<svg class="a" style="left:20px;top:378px" width="16" height="16" viewBox="0 0 16 16"><rect x="1.5" y="2" width="13" height="12" stroke="#2e2e2e" stroke-width="1.4" fill="none"/><path d="M4.5 2V14M11.5 2V14M4.5 8H11.5" stroke="#2e2e2e" stroke-width="1.3"/><path d="M1.5 5H4.5M1.5 8H4.5M1.5 11H4.5M11.5 5H14.5M11.5 8H14.5M11.5 11H14.5" stroke="#2e2e2e" stroke-width="1"/></svg>
<div class="t sb" style="left:45px;top:379.4px">Videos</div>
<svg class="a" style="left:20px;top:416px" width="16" height="16" viewBox="0 0 16 16"><path d="M6.5 1.5H9.5V7H12L8 11L4 7H6.5Z" stroke="#2e2e2e" stroke-width="1.2" fill="none"/><path d="M3 14.3H13" stroke="#2e2e2e" stroke-width="1.3"/></svg>
<div class="t sb" style="left:45px;top:417.4px">Downloads</div>

<div class="a" style="left:7px;top:248px;width:167px;height:1px;background:#d6d6d6"></div>
<svg class="a" style="left:198px;top:14px" width="10" height="16" viewBox="0 0 10 16"><path d="M7 1.5L2.5 8L7 14.5" stroke="#b0b0b0" stroke-width="1.2" fill="none"/></svg>
<svg class="a" style="left:239px;top:14px" width="10" height="16" viewBox="0 0 10 16"><path d="M3 1.5L7.5 8L3 14.5" stroke="#b0b0b0" stroke-width="1.2" fill="none"/></svg>
<div class="a" style="left:267px;top:6px;width:221px;height:34px;border-radius:9px;background:#ebebeb"></div>
<svg class="a" style="left:279px;top:14px" width="16" height="16" viewBox="0 0 16 16"><path d="M1.5 8L8 1.8L14.5 8M3.5 6.5V14.5H7V10.5H9V14.5H12.5V6.5M12 2.5V5" stroke="#2e2e2e" stroke-width="1.3" fill="none"/><rect x="8.6" y="10.5" width="2.5" height="4" fill="#2e2e2e"/></svg>
<div class="t" style="left:301px;top:16px;font-size:14.2px;font-weight:bold;color:#2e2e2e">Home</div>
<svg class="a" style="left:468px;top:14px" width="4" height="16" viewBox="0 0 4 16"><circle cx="2" cy="3.2" r="1.3" fill="#2e2e2e"/><circle cx="2" cy="8" r="1.3" fill="#2e2e2e"/><circle cx="2" cy="12.8" r="1.3" fill="#2e2e2e"/></svg>
<svg class="a" style="left:503px;top:14px" width="18" height="18" viewBox="0 0 18 18"><path d="M5 2.5H2.5V14.5Q2.5 15.5 3.5 15.5H5" stroke="#2e2e2e" stroke-width="1.2" fill="none"/><path d="M4 2.5Q4 1.5 5 1.5H9L10.5 3H15Q16 3 16 4V8" stroke="#2e2e2e" stroke-width="1.2" fill="none"/><circle cx="11" cy="10.8" r="3.8" stroke="#2e2e2e" stroke-width="1.4" fill="none"/><path d="M13.7 13.5L16.3 16.2" stroke="#2e2e2e" stroke-width="1.6"/></svg>
<svg class="a" style="left:545px;top:16px" width="14" height="13" viewBox="0 0 14 13"><path d="M4.5 1.7H13.5M4.5 6.3H13.5M4.5 10.9H13.5" stroke="#2e2e2e" stroke-width="1.3"/><rect x="0.5" y="0.5" width="2.5" height="2.5" stroke="#2e2e2e" stroke-width="1" fill="none"/><rect x="0.5" y="5.1" width="2.5" height="2.5" stroke="#2e2e2e" stroke-width="1" fill="none"/><rect x="0.5" y="9.7" width="2.5" height="2.5" stroke="#2e2e2e" stroke-width="1" fill="none"/></svg>
<div class="a" style="left:567px;top:12px;width:1px;height:22px;background:#d0d0d0"></div>
<svg class="a" style="left:574px;top:19px" width="11" height="7" viewBox="0 0 11 7"><path d="M1 1L5.5 5.5L10 1" stroke="#2e2e2e" stroke-width="1.3" fill="none"/></svg>
<div class="a" style="left:602px;top:11px;width:24px;height:24px;border-radius:12px;background:#e6e6e6"></div>
<div class="a" style="left:639px;top:11px;width:24px;height:24px;border-radius:12px;background:#e6e6e6"></div>
<div class="a" style="left:676px;top:11px;width:24px;height:24px;border-radius:12px;background:#e6e6e6"></div>
<svg class="a" style="left:602px;top:11px" width="24" height="24" viewBox="0 0 24 24"><path d="M8 15.5H16" stroke="#2e2e2e" stroke-width="1.3"/></svg>
<svg class="a" style="left:639px;top:11px" width="24" height="24" viewBox="0 0 24 24"><rect x="7.7" y="7.7" width="8.6" height="8.6" stroke="#2e2e2e" stroke-width="1.3" fill="none"/></svg>
<svg class="a" style="left:676px;top:11px" width="24" height="24" viewBox="0 0 24 24"><path d="M7.8 7.8L16.2 16.2M16.2 7.8L7.8 16.2" stroke="#2e2e2e" stroke-width="1.4"/></svg>
<svg class="a" style="left:235.3px;top:81px" width="86" height="76" viewBox="0 0 86 76"><path d="M1 7Q1 1 7 1H28Q30.5 1 32.5 3L37 6.8H79Q85 6.8 85 12.8V67Q85 73.5 79 73.5H7Q1 73.5 1 67Z" fill="#a92c0a"/>
<path d="M1 22Q1 16.5 7 16.5H30Q32 16.5 33.5 15L36 13H79Q85 13 85 19V67Q85 74 79 74H7Q1 74 1 67Z" fill="#b94419"/>
<path d="M1 22Q1 16.5 7 16.5H30Q32 16.5 33.5 15L36 13H79Q85 13 85 19V66Q85 72.3 79 72.3H7Q1 72.3 1 66Z" fill="#dc5b2b"/><g fill="#8a1e06"><path d="M30 29H57Q59 29 59 31V51Q59 53 57 53H30Q26 53 26 49V33Q26 29 30 29Z"/><rect x="32" y="32" width="24" height="18" fill="#dc5b2b"/><rect x="39" y="53" width="8" height="4"/><rect x="32" y="56.5" width="21" height="2.5" rx="1"/></g></svg>
<div class="t lbl" style="left:218.29999999999995px;top:173.0px;width:120px;text-align:center">Desktop</div>
<svg class="a" style="left:402.5px;top:81px" width="86" height="76" viewBox="0 0 86 76"><path d="M1 7Q1 1 7 1H28Q30.5 1 32.5 3L37 6.8H79Q85 6.8 85 12.8V67Q85 73.5 79 73.5H7Q1 73.5 1 67Z" fill="#a92c0a"/>
<path d="M1 22Q1 16.5 7 16.5H30Q32 16.5 33.5 15L36 13H79Q85 13 85 19V67Q85 74 79 74H7Q1 74 1 67Z" fill="#b94419"/>
<path d="M1 22Q1 16.5 7 16.5H30Q32 16.5 33.5 15L36 13H79Q85 13 85 19V66Q85 72.3 79 72.3H7Q1 72.3 1 66Z" fill="#dc5b2b"/><g fill="none" stroke="#8a1e06" stroke-width="2.2"><path d="M31 26.5H45L53 34.5V55Q53 57.5 50.5 57.5H31Q28.5 57.5 28.5 55V29Q28.5 26.5 31 26.5Z"/><path d="M33 42H46M33 46H46M33 50H40"/></g><path d="M45 26.5V34.5H53Z" fill="#8a1e06"/></svg>
<div class="t lbl" style="left:385.5px;top:173.0px;width:120px;text-align:center">Documents</div>
<svg class="a" style="left:569.6px;top:81px" width="86" height="76" viewBox="0 0 86 76"><path d="M1 7Q1 1 7 1H28Q30.5 1 32.5 3L37 6.8H79Q85 6.8 85 12.8V67Q85 73.5 79 73.5H7Q1 73.5 1 67Z" fill="#a92c0a"/>
<path d="M1 22Q1 16.5 7 16.5H30Q32 16.5 33.5 15L36 13H79Q85 13 85 19V67Q85 74 79 74H7Q1 74 1 67Z" fill="#b94419"/>
<path d="M1 22Q1 16.5 7 16.5H30Q32 16.5 33.5 15L36 13H79Q85 13 85 19V66Q85 72.3 79 72.3H7Q1 72.3 1 66Z" fill="#dc5b2b"/><g fill="none" stroke="#8a1e06" stroke-width="2"><path d="M39 27H45V38H51L42 47.5L33 38H39Z"/><path d="M31 57H53"/></g></svg>
<div class="t lbl" style="left:552.5999999999999px;top:173.0px;width:120px;text-align:center">Downloads</div>
<svg class="a" style="left:235.3px;top:219px" width="86" height="76" viewBox="0 0 86 76"><path d="M1 7Q1 1 7 1H28Q30.5 1 32.5 3L37 6.8H79Q85 6.8 85 12.8V67Q85 73.5 79 73.5H7Q1 73.5 1 67Z" fill="#a92c0a"/>
<path d="M1 22Q1 16.5 7 16.5H30Q32 16.5 33.5 15L36 13H79Q85 13 85 19V67Q85 74 79 74H7Q1 74 1 67Z" fill="#b94419"/>
<path d="M1 22Q1 16.5 7 16.5H30Q32 16.5 33.5 15L36 13H79Q85 13 85 19V66Q85 72.3 79 72.3H7Q1 72.3 1 66Z" fill="#dc5b2b"/><g fill="#8a1e06"><path d="M36 28.2L55.5 25.6V29.6L39.7 31.8V56H36Z"/><path d="M51.7 28V53.5H55.5V28Z"/><ellipse cx="32.2" cy="56.3" rx="4.6" ry="3.8"/><ellipse cx="50.8" cy="53.9" rx="4.6" ry="3.8"/></g></svg>
<div class="t lbl" style="left:218.29999999999995px;top:312.1px;width:120px;text-align:center">Music</div>
<svg class="a" style="left:402.5px;top:219px" width="86" height="76" viewBox="0 0 86 76"><path d="M1 7Q1 1 7 1H28Q30.5 1 32.5 3L37 6.8H79Q85 6.8 85 12.8V67Q85 73.5 79 73.5H7Q1 73.5 1 67Z" fill="#a92c0a"/>
<path d="M1 22Q1 16.5 7 16.5H30Q32 16.5 33.5 15L36 13H79Q85 13 85 19V67Q85 74 79 74H7Q1 74 1 67Z" fill="#b94419"/>
<path d="M1 22Q1 16.5 7 16.5H30Q32 16.5 33.5 15L36 13H79Q85 13 85 19V66Q85 72.3 79 72.3H7Q1 72.3 1 66Z" fill="#dc5b2b"/><g fill="#8a1e06"><path d="M22.9 57.3L35.5 36.7L40 43.8L44.6 41.3L54.9 57.3Z"/><circle cx="57.2" cy="31" r="6"/></g></svg>
<div class="t lbl" style="left:385.5px;top:312.1px;width:120px;text-align:center">Pictures</div>
<svg class="a" style="left:569.6px;top:219px" width="86" height="76" viewBox="0 0 86 76"><path d="M1 7Q1 1 7 1H28Q30.5 1 32.5 3L37 6.8H79Q85 6.8 85 12.8V67Q85 73.5 79 73.5H7Q1 73.5 1 67Z" fill="#a92c0a"/>
<path d="M1 22Q1 16.5 7 16.5H30Q32 16.5 33.5 15L36 13H79Q85 13 85 19V67Q85 74 79 74H7Q1 74 1 67Z" fill="#b94419"/>
<path d="M1 22Q1 16.5 7 16.5H30Q32 16.5 33.5 15L36 13H79Q85 13 85 19V66Q85 72.3 79 72.3H7Q1 72.3 1 66Z" fill="#dc5b2b"/><g fill="none" stroke="#8a1e06" stroke-width="2.2"><circle cx="29" cy="41.8" r="4.2"/><circle cx="50.5" cy="31.8" r="4.2"/><circle cx="50.5" cy="52.3" r="4.2"/><path d="M33 39.8L46.5 33.8M33 43.8L46.5 50.3"/></g></svg>
<div class="t lbl" style="left:552.5999999999999px;top:312.1px;width:120px;text-align:center">Public</div>
<svg class="a" style="left:235.3px;top:357px" width="86" height="76" viewBox="0 0 86 76"><path d="M1 7Q1 1 7 1H28Q30.5 1 32.5 3L37 6.8H79Q85 6.8 85 12.8V67Q85 73.5 79 73.5H7Q1 73.5 1 67Z" fill="#a92c0a"/>
<path d="M1 22Q1 16.5 7 16.5H30Q32 16.5 33.5 15L36 13H79Q85 13 85 19V67Q85 74 79 74H7Q1 74 1 67Z" fill="#b94419"/>
<path d="M1 22Q1 16.5 7 16.5H30Q32 16.5 33.5 15L36 13H79Q85 13 85 19V66Q85 72.3 79 72.3H7Q1 72.3 1 66Z" fill="#dc5b2b"/></svg>
<div class="t lbl" style="left:218.29999999999995px;top:449.8px;width:120px;text-align:center">snap</div>
<svg class="a" style="left:402.5px;top:357px" width="86" height="76" viewBox="0 0 86 76"><path d="M1 7Q1 1 7 1H28Q30.5 1 32.5 3L37 6.8H79Q85 6.8 85 12.8V67Q85 73.5 79 73.5H7Q1 73.5 1 67Z" fill="#a92c0a"/>
<path d="M1 22Q1 16.5 7 16.5H30Q32 16.5 33.5 15L36 13H79Q85 13 85 19V67Q85 74 79 74H7Q1 74 1 67Z" fill="#b94419"/>
<path d="M1 22Q1 16.5 7 16.5H30Q32 16.5 33.5 15L36 13H79Q85 13 85 19V66Q85 72.3 79 72.3H7Q1 72.3 1 66Z" fill="#dc5b2b"/><g fill="none" stroke="#8a1e06" stroke-width="2"><rect x="30" y="27.5" width="10" height="31"/><path d="M35 31.5H39M36 35.5H39M35 39.5H39M36 43.5H39M35 47.5H39M36 51.5H39"/></g><path d="M45.5 27.5H53.8V54.5L49.6 59.5L45.5 54.5Z" fill="#8a1e06"/><rect x="47.5" y="29.5" width="4" height="3" fill="#dc5b2b"/><path d="M47.5 52.5H52L49.7 56Z" fill="#dc5b2b"/></svg>
<div class="t lbl" style="left:385.5px;top:449.8px;width:120px;text-align:center">Templates</div>
<svg class="a" style="left:569.6px;top:357px" width="86" height="76" viewBox="0 0 86 76"><path d="M1 7Q1 1 7 1H28Q30.5 1 32.5 3L37 6.8H79Q85 6.8 85 12.8V67Q85 73.5 79 73.5H7Q1 73.5 1 67Z" fill="#a92c0a"/>
<path d="M1 22Q1 16.5 7 16.5H30Q32 16.5 33.5 15L36 13H79Q85 13 85 19V67Q85 74 79 74H7Q1 74 1 67Z" fill="#b94419"/>
<path d="M1 22Q1 16.5 7 16.5H30Q32 16.5 33.5 15L36 13H79Q85 13 85 19V66Q85 72.3 79 72.3H7Q1 72.3 1 66Z" fill="#dc5b2b"/><g fill="#8a1e06"><rect x="23" y="29.5" width="6" height="27.5"/><rect x="54" y="29.5" width="6" height="27.5"/></g><g fill="none" stroke="#8a1e06" stroke-width="2"><path d="M29 30.5H54M29 56H54M29 43.2H54"/></g><rect x="24.5" y="31.5" width="3" height="2" fill="#dc5b2b"/><rect x="55.5" y="31.5" width="3" height="2" fill="#dc5b2b"/><rect x="24.5" y="35.5" width="3" height="2" fill="#dc5b2b"/><rect x="55.5" y="35.5" width="3" height="2" fill="#dc5b2b"/><rect x="24.5" y="39.5" width="3" height="2" fill="#dc5b2b"/><rect x="55.5" y="39.5" width="3" height="2" fill="#dc5b2b"/><rect x="24.5" y="43.5" width="3" height="2" fill="#dc5b2b"/><rect x="55.5" y="43.5" width="3" height="2" fill="#dc5b2b"/><rect x="24.5" y="47.5" width="3" height="2" fill="#dc5b2b"/><rect x="55.5" y="47.5" width="3" height="2" fill="#dc5b2b"/><rect x="24.5" y="51.5" width="3" height="2" fill="#dc5b2b"/><rect x="55.5" y="51.5" width="3" height="2" fill="#dc5b2b"/></svg>
<div class="t lbl" style="left:552.5999999999999px;top:449.8px;width:120px;text-align:center">Videos</div>

</div>

<!-- QUICK SETTINGS -->
<div class="a" id="qs" style="left:1511px;top:40px;width:402px;height:236px;border-radius:19px;background:#ffffff;box-shadow:0 2px 18px rgba(20,0,10,0.45)">
<div class="a" style="left:19.2px;top:18.8px;width:38px;height:38px;border-radius:19px;background:#e6e6e6"></div>
<div class="a" style="left:68.9px;top:18.8px;width:38px;height:38px;border-radius:19px;background:#e6e6e6"></div>
<div class="a" style="left:294.9px;top:18.8px;width:38px;height:38px;border-radius:19px;background:#e6e6e6"></div>
<div class="a" style="left:344.7px;top:18.8px;width:38px;height:38px;border-radius:19px;background:#e6e6e6"></div>
<svg class="a" style="left:30px;top:30px" width="16" height="16" viewBox="0 0 16 16"><path d="M1 4Q1 1 4 1M12 1Q15 1 15 4M1 10.5Q1 12.5 3 13" stroke="#2e2e2e" stroke-width="1.2" fill="none"/><rect x="5.5" y="7" width="10" height="7.5" rx="1" stroke="#2e2e2e" stroke-width="1.2" fill="none"/><circle cx="10.5" cy="10.7" r="1.6" stroke="#2e2e2e" stroke-width="1.1" fill="none"/><path d="M7 7L8 5.5H9.5" stroke="#2e2e2e" stroke-width="1.1" fill="none"/></svg>
<svg class="a" style="left:80px;top:30px" width="16" height="16" viewBox="0 0 16 16"><circle cx="8" cy="8" r="6.3" stroke="#2e2e2e" stroke-width="1.6" fill="none" stroke-dasharray="2.2 0.9"/><circle cx="8" cy="8" r="5.6" stroke="#2e2e2e" stroke-width="1" fill="none"/><circle cx="8" cy="8" r="3.6" stroke="#2e2e2e" stroke-width="1.2" fill="none"/></svg>
<svg class="a" style="left:306px;top:29.5px" width="16" height="17" viewBox="0 0 16 17"><path d="M4.5 8V5Q4.5 1.5 8 1.5Q11.5 1.5 11.5 5V8" stroke="#2e2e2e" stroke-width="1.3" fill="none"/><rect x="2.5" y="8" width="11" height="8" rx="0.5" stroke="#2e2e2e" stroke-width="1.3" fill="none"/><rect x="7" y="11" width="2" height="2.5" fill="#2e2e2e"/></svg>
<svg class="a" style="left:355.7px;top:29.8px" width="16" height="16" viewBox="0 0 16 16"><path d="M4.8 3.5A6 6 0 1 0 11.2 3.5" stroke="#2e2e2e" stroke-width="1.2" fill="none"/><path d="M8 1V7.5" stroke="#2e2e2e" stroke-width="1.2"/></svg>
<svg class="a" style="left:26px;top:76px" width="15" height="14" viewBox="0 0 15 14"><path d="M0.5 4.3H3.5L7 0.8V13.2L3.5 9.7H0.5Z" fill="#2e2e2e"/><path d="M9 4.5Q10.3 7 9 9.5M11.3 2.5Q13.8 7 11.3 11.5" stroke="#2e2e2e" stroke-width="1" fill="none"/></svg>
<div class="a" style="left:59px;top:80.7px;width:318px;height:4.2px;border-radius:2px;background:#e8e8e8"></div>
<div class="a" style="left:59px;top:80.7px;width:272px;height:4.2px;border-radius:2px;background:#c64a1c"></div>
<div class="a" style="left:322.6px;top:74.5px;width:16.6px;height:16.6px;border-radius:9px;background:#222"></div>
<div class="a" style="left:19.9px;top:108.9px;width:175px;height:47.6px;border-radius:24px;background:#c1431a;overflow:hidden"><div class="a" style="left:0;top:0;width:138.6px;height:47.6px;background:#d04917"></div><div class="a" style="left:138.6px;top:0;width:1px;height:47.6px;background:#e27950"></div></div>
<div class="a" style="left:207.3px;top:108.9px;width:175.2px;height:47.6px;border-radius:24px;background:#e6e6e6"></div>
<div class="a" style="left:19.9px;top:169.3px;width:175px;height:47px;border-radius:24px;background:#e6e6e6"></div>
<div class="a" style="left:207.3px;top:169.3px;width:175.2px;height:47px;border-radius:24px;background:#e6e6e6"></div>
<svg class="a" style="left:34px;top:125.5px" width="16" height="14" viewBox="0 0 16 14"><rect x="5.7" y="0.5" width="4.6" height="3.6" rx="0.5" fill="#fdeee6"/><rect x="0.3" y="9" width="4.6" height="4.4" rx="0.5" fill="#fdeee6"/><rect x="11" y="9" width="4.6" height="4.4" rx="0.5" fill="#fdeee6"/><path d="M8 4V6.6M2.6 9V6.6H13.3V9" stroke="#fdeee6" stroke-width="1" fill="none"/></svg>
<div class="t" style="left:59.3px;top:124.7px;font-size:15.36px;font-weight:normal;-webkit-text-stroke:0.45px currentColor;color:#fdeee6">Wired</div>
<svg class="a" style="left:174px;top:125.5px" width="8" height="16" viewBox="0 0 8 16"><path d="M1.5 1L6.5 8L1.5 15" stroke="#fdeee6" stroke-width="1.1" fill="none"/></svg>
<svg class="a" style="left:221.5px;top:124px" width="16" height="16" viewBox="0 0 16 16"><path d="M3.2 13.2A6.5 6.5 0 1 1 12.8 13.2" stroke="#2e2e2e" stroke-width="1.4" fill="none" stroke-dasharray="6 1.3"/><path d="M8 4.5V8.5" stroke="#2e2e2e" stroke-width="1.5"/><circle cx="8" cy="9" r="1.3" fill="#2e2e2e"/></svg>
<div class="t" style="left:247.9px;top:117.6px;font-size:14.96px;font-weight:normal;-webkit-text-stroke:0.45px currentColor;color:#2e2e2e">Power Mode</div>
<div class="t" style="left:247.9px;top:136px;font-size:11.7px;color:#3a3a3a">Balanced</div>
<svg class="a" style="left:34.5px;top:184.8px" width="16" height="16" viewBox="0 0 16 16"><circle cx="8" cy="8" r="6.6" stroke="#2e2e2e" stroke-width="1.4" fill="none"/><path d="M8 1.4A6.6 6.6 0 0 0 8 14.6Z" fill="#2e2e2e"/></svg>
<div class="t" style="left:59.5px;top:185.3px;font-size:14.8px;font-weight:normal;-webkit-text-stroke:0.45px currentColor;color:#2e2e2e">Dark Style</div>
<svg class="a" style="left:221.5px;top:184.8px" width="16" height="17" viewBox="0 0 16 17"><path d="M3.5 12.5V7.5Q3.5 3 8 2.5Q12.5 3 12.5 7.5V12.5L14 13.5H2Z" stroke="#2e2e2e" stroke-width="1.2" fill="none" stroke-linejoin="round"/><path d="M1.5 15.5L14.5 1.5" stroke="#2e2e2e" stroke-width="1.2"/><path d="M6.5 14.8Q8 16.5 9.5 14.8" fill="#2e2e2e"/></svg>
<div class="t" style="left:247.9px;top:185.0px;font-size:15.2px;font-weight:normal;letter-spacing:0.1px;-webkit-text-stroke:0.45px currentColor;color:#2e2e2e">Do Not Disturb</div>
</div>

</body></html>
